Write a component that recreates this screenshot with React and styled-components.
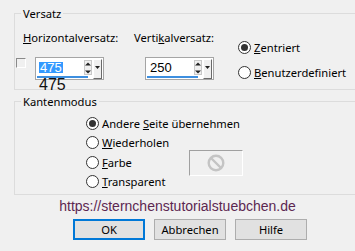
import styled, { createGlobalStyle } from "styled-components";

const GlobalStyle = createGlobalStyle`
  body {
    margin: 0;
    background: #f0f0f0;
    font-family: "Noto Sans", "Open Sans", sans-serif;
    font-size: 11px;
    color: #000;
  }
`;

const Dialog = styled.div`
  width: 355px;
  height: 251px;
  padding: 6px 0 0 14px;
  box-sizing: border-box;
  overflow: hidden;
`;

const Group = styled.fieldset`
  margin: 0;
  margin-top: ${(p) => p.$top || 0}px;
  padding: 0 0 ${(p) => p.$bottom || 0}px 0;
  min-width: 0;
  border: 1px solid #dcdcdc;
  border-right: none;
`;

const Legend = styled.legend`
  margin-left: 6px;
  padding: 0 2px;
  line-height: 15px;
  font-size: 11.2px;
`;

const OffsetRow = styled.div`
  display: flex;
`;

const Column = styled.div`
  display: flex;
  flex-direction: column;
  width: ${(p) => p.$w}px;
`;

const Label = styled.div`
  line-height: 15px;
  margin-top: 8.5px;
  padding-left: ${(p) => p.$pad || 0}px;
  font-size: 11.2px;
  white-space: nowrap;
`;

const InputRow = styled.div`
  display: flex;
  align-items: flex-start;
  margin-top: 12.5px;
  padding-left: ${(p) => p.$pad || 0}px;
`;

const CheckBox = styled.div`
  width: 8px;
  height: 8px;
  margin: 1px 9px 0 1px;
  border-top: 1px solid #8a8a8a;
  border-left: 1px solid #8a8a8a;
  border-right: 1px solid #ffffff;
  border-bottom: 1px solid #ffffff;
`;

const Spinner = styled.div`
  position: relative;
  width: 69px;
  height: 23px;
  box-sizing: border-box;
  border: 1px solid #a5a5a5;
  background: #fff;
  display: flex;
  align-items: flex-start;
  padding: 1px 0 0 1px;
`;

const Field = styled.div`
  width: 51px;
  height: 19px;
  box-sizing: border-box;
  border-bottom: 2px solid #3d8fe0;
  display: flex;
  align-items: center;
  justify-content: space-between;
  padding: 0 0 0 2px;
`;

const Value = styled.span`
  font-family: "Liberation Sans", Arial, sans-serif;
  font-size: 13px;
  line-height: 11px;
  padding: 0 1px;
  color: ${(p) => (p.$selected ? "#fff" : "#000")};
  background: ${(p) => (p.$selected ? "#3399ff" : "transparent")};
`;

const Arrows = styled.div`
  width: 8px;
  height: 15px;
  margin-right: -4px;
  margin-top: -1px;
  display: flex;
  flex-direction: column;
  justify-content: space-between;
  background: #f0f0f0;
  border: 1px solid #c8c8c8;
  box-sizing: border-box;
`;

const Drop = styled.div`
  width: 9px;
  height: 20px;
  margin-left: auto;
  margin-right: 1px;
  box-sizing: border-box;
  background: #f0f0f0;
  border-top: 1px solid #ffffff;
  border-left: 1px solid #ffffff;
  border-right: 1px solid #6a6a6a;
  border-bottom: 1px solid #6a6a6a;
  display: flex;
  justify-content: center;
  padding-top: 6px;
`;

const Echo = styled.div`
  position: absolute;
  left: 3px;
  top: 18px;
  font-family: "Liberation Sans", Arial, sans-serif;
  font-size: 16px;
  line-height: 18px;
  color: #111;
`;

const RadioColumn = styled.div`
  display: flex;
  flex-direction: column;
  gap: ${(p) => p.$gap}px;
  padding-top: ${(p) => p.$top}px;
  padding-left: ${(p) => p.$left || 0}px;
`;

const RadioRow = styled.div`
  display: flex;
  align-items: center;
  height: 15px;
  font-size: 11.2px;
  white-space: nowrap;
`;

const RadioDot = styled.span`
  width: 13px;
  height: 13px;
  box-sizing: border-box;
  border-radius: 50%;
  border: 1px solid #333;
  background: #fff;
  margin-right: 3px;
  display: flex;
  align-items: center;
  justify-content: center;
  &::after {
    content: "";
    width: 7px;
    height: 7px;
    border-radius: 50%;
    background: ${(p) => (p.$on ? "#333" : "transparent")};
  }
`;

const ColorBox = styled.div`
  width: 54px;
  height: 26px;
  margin: -5px 0 -6px 57px;
  box-sizing: border-box;
  border-top: 1px solid #a0a0a0;
  border-left: 1px solid #a0a0a0;
  border-right: 1px solid #ffffff;
  border-bottom: 1px solid #ffffff;
  display: flex;
  align-items: center;
  justify-content: center;
`;

const Url = styled.div`
  margin: 3px 0 0 -14px;
  text-align: center;
  font-family: "Liberation Sans", Arial, sans-serif;
  font-size: 14px;
  line-height: 16px;
  color: #5c2750;
`;

const Buttons = styled.div`
  display: flex;
  gap: 9px;
  margin: 5px 0 0 59px;
`;

const Button = styled.button`
  width: 72px;
  height: 21px;
  box-sizing: border-box;
  padding: 0;
  font-family: "Noto Sans", "Open Sans", sans-serif;
  font-size: 11.2px;
  color: #000;
  background: #e1e1e1;
  border: ${(p) => (p.$primary ? "2px solid #0078d7" : "1px solid #adadad")};
`;

const Tri = ({ up }) => (
  <svg width="6" height="4" viewBox="0 0 6 4" style={{ display: "block", margin: "1px auto 0" }}>
    <path d={up ? "M0 3.5 L3 0.5 L6 3.5 Z" : "M0 0.5 L3 3.5 L6 0.5 Z"} fill="#222" />
  </svg>
);

const SpinBox = ({ value, selected, echo }) => (
  <Spinner>
    <Field>
      <Value $selected={selected}>{value}</Value>
      <Arrows>
        <Tri up />
        <Tri />
      </Arrows>
    </Field>
    <Drop>
      <svg width="5" height="3" viewBox="0 0 5 3">
        <path d="M0 0 L2.5 3 L5 0 Z" fill="#222" />
      </svg>
    </Drop>
    {echo && <Echo>{echo}</Echo>}
  </Spinner>
);

const Radio = ({ on, children }) => (
  <RadioRow>
    <RadioDot $on={on} />
    <span>{children}</span>
  </RadioRow>
);

export default function App() {
  return (
    <>
      <GlobalStyle />
      <Dialog>
        <Group $bottom={9}>
          <Legend>Versatz</Legend>
          <OffsetRow>
            <Column $w={119}>
              <Label $pad={8}>
                <u>H</u>orizontalversatz:
              </Label>
              <InputRow>
                <CheckBox />
                <SpinBox value="475" selected echo="475" />
              </InputRow>
            </Column>
            <Column $w={104}>
              <Label>
                Verti<u>k</u>alversatz:
              </Label>
              <InputRow $pad={11}>
                <SpinBox value="250" />
              </InputRow>
            </Column>
            <RadioColumn $top={19} $gap={10}>
              <Radio on>
                <u>Z</u>entriert
              </Radio>
              <Radio>
                <u>B</u>enutzerdefiniert
              </Radio>
            </RadioColumn>
          </OffsetRow>
        </Group>
        <Group $top={4} $bottom={5}>
          <Legend>Kantenmodus</Legend>
          <RadioColumn $top={6.5} $gap={4.5} $left={71}>
            <Radio on>
              Andere <u>S</u>eite übernehmen
            </Radio>
            <Radio>
              <u>W</u>iederholen
            </Radio>
            <RadioRow>
              <RadioDot />
              <span>
                <u>F</u>arbe
              </span>
              <ColorBox>
                <svg width="18" height="18" viewBox="0 0 18 18">
                  <circle cx="9" cy="9" r="7.3" fill="none" stroke="#c4c4c4" strokeWidth="2.4" />
                  <path d="M4 4 L14 14" stroke="#c4c4c4" strokeWidth="2.4" />
                </svg>
              </ColorBox>
            </RadioRow>
            <Radio>
              <u>T</u>ransparent
            </Radio>
          </RadioColumn>
        </Group>
        <Url>https://sternchenstutorialstuebchen.de</Url>
        <Buttons>
          <Button $primary>OK</Button>
          <Button>Abbrechen</Button>
          <Button>Hilfe</Button>
        </Buttons>
      </Dialog>
    </>
  );
}
